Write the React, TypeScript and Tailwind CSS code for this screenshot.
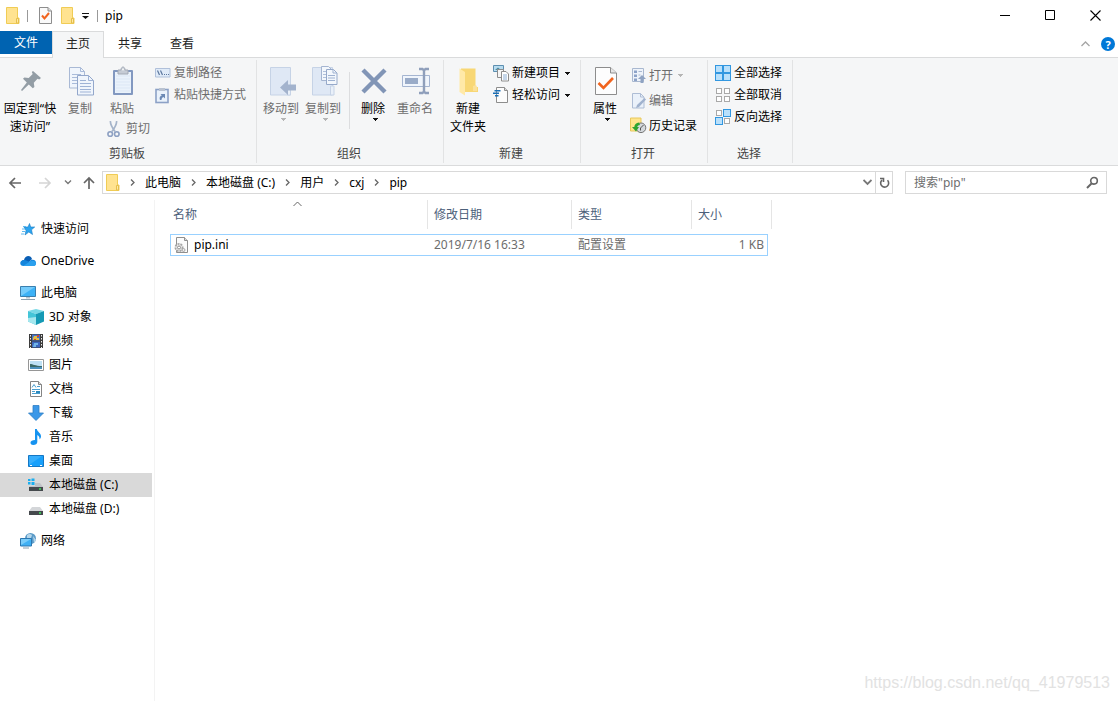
import { useState } from 'react';
import type { ReactNode } from 'react';
import clsx from 'clsx';

/* ---------- icons ---------- */

const FolderIcon = () => (
  <svg width="14" height="17" viewBox="0 0 14 17">
    <path d="M.5 .5h11v10.500h1.500v5.500H.5z" fill="#ffe390" stroke="#f0cc55" />
    <path d="M10.500 16V11.500h2V16z" fill="#ffe9a6" stroke="#e5bf4c" />
  </svg>
);

const CheckDocIcon = ({ big = false }: { big?: boolean }) => (
  <svg width={big ? 22 : 13} height={big ? 30 : 17} viewBox={big ? '0 0 22 30' : '0 0 13 17'}>
    {big ? (
      <>
        <path d="M.5 1.500h15l6 5.500v21.500H.5z" fill="#fdfdfd" stroke="#8d8d8d" />
        <path d="M15.500 1.500V7h6" fill="#e6e6e6" stroke="#8d8d8d" />
        <path d="M3.500 17l5 5L18 12" fill="none" stroke="#f1641e" strokeWidth="2.600" />
      </>
    ) : (
      <>
        <path d="M.5 .5h8.500l3.500 3.500v12.500H.5z" fill="#fafafa" stroke="#8d8d8d" />
        <path d="M9 .5V4h3.500" fill="#ddd" stroke="#8d8d8d" />
        <path d="M3 8.500l2.500 3 4.500-5.500" fill="none" stroke="#f1641e" strokeWidth="2" />
      </>
    )}
  </svg>
);

const Caret = ({ color = '#111' }: { color?: string }) => (
  <svg width="6" height="3" viewBox="0 0 6 3" shapeRendering="crispEdges">
    <path d="M0 0h6L3 3z" fill={color} />
  </svg>
);

const PinIcon = () => (
  <svg width="22" height="22" viewBox="0 0 22 22">
    <path d="M13 1l8 7-1.800 1.500-1.700-.7-3.700 4 .6 4.200-1.600 1.200-4-3.700L2 21l-1-1 5.800-7.500L3 8.800 4.400 7.500l4.300.4 4-3.800L11.800 2z" fill="#939da5" />
  </svg>
);

const CopyIcon = () => (
  <svg width="25" height="30" viewBox="0 0 25 30">
    <path d="M.5 1.500h11l4 4v16.500H.5z" fill="#f0f5fc" stroke="#a9b9d5" />
    <path d="M11.500 1.500v4h4M3 8.500h9M3 11.500h6M3 14.500h6M3 17.500h6" fill="none" stroke="#a9bbda" />
    <path d="M8.500 9.500h11l5 5v14.500h-16z" fill="#f0f5fc" stroke="#93a7cb" />
    <path d="M19.500 9.500v5h5M11 14.500h6M11 17.500h11M11 20.500h11M11 23.500h11M11 26h11" fill="none" stroke="#9fb3d6" />
  </svg>
);

const ClipboardIcon = () => (
  <svg width="22" height="30" viewBox="0 0 22 30">
    <rect x="1" y="4" width="20" height="25" rx="1" fill="#8298c0" />
    <path d="M3 6h16v21H3z" fill="#eaf2fb" />
    <path d="M4 10h14M4 13h14M4 16h14M4 19h14M4 22h14M4 25h14" stroke="#dce7f5" />
    <path d="M6 4h3c0-4 4-4 4 0h3v4H6z" fill="#c5cbd5" stroke="#a2a9b5" />
    <circle cx="11" cy="3.500" r="1" fill="#f5f6f7" />
  </svg>
);

const ScissorsIcon = () => (
  <svg width="13" height="17" viewBox="0 0 13 17" fill="none">
    <path d="M3.500 0c-.5 3 .5 5 4.500 10.500M9.500 0c.5 3-.5 5-4.500 10.500" stroke="#a4b3c9" strokeWidth="1.700" />
    <circle cx="3.200" cy="13" r="2.300" stroke="#8da0c2" strokeWidth="1.600" />
    <circle cx="9.800" cy="13" r="2.300" stroke="#8da0c2" strokeWidth="1.600" />
  </svg>
);

const PathIcon = () => (
  <svg width="16" height="10" viewBox="0 0 16 10">
    <path d="M.5 .5h14.500v8.500H.5z" fill="#e0ebf8" stroke="#b0c0da" />
    <path d="M2.500 2.500l2 4.500M5.500 2.500l2 4.500" stroke="#5d789f" strokeWidth="1.200" />
    <path d="M9 6.500h1M11 6.500h1M13 6.500h1" stroke="#5d789f" />
  </svg>
);

const ShortcutIcon = () => (
  <svg width="14" height="17" viewBox="0 0 14 17">
    <rect x="1" y="2.500" width="12" height="13" fill="#eaf2fb" stroke="#8ca1c6" strokeWidth="1.600" />
    <path d="M4 1h6v3H4z" fill="#b9c2d0" />
    <path d="M5 13c-1-3 .5-4.500 2-4.500L5.500 7H10v4.500L8.500 10C7 10.500 6.500 12 6.500 13z" fill="#6d8ab5" />
  </svg>
);

const MoveToIcon = () => (
  <svg width="27" height="30" viewBox="0 0 27 30">
    <path d="M1.500 1.500h20v27.500h-20z" fill="#dfe8f5" stroke="#c6d3e6" />
    <path d="M18.500 29v-7.500h3V29z" fill="#e9f0f9" stroke="#c6d3e6" />
    <path d="M11 21.500l8-7.500v4.500h8v6h-8V29z" fill="#a3b3cd" />
  </svg>
);

const CopyToIcon = () => (
  <svg width="27" height="30" viewBox="0 0 27 30">
    <path d="M1.500 1.500h20v27.500h-20z" fill="#dfe8f5" stroke="#c6d3e6" />
    <path d="M19.500 29v-9h3.500v9z" fill="#e9f0f9" stroke="#c6d3e6" />
    <path d="M10.500 .5h7l3 3v11h-10z" fill="#f3f7fc" stroke="#a5b5d1" />
    <path d="M12 5.500h4M12 8.500h4M12 11.500h4" stroke="#b0c0da" />
    <path d="M15.500 3.500h7l3.500 3.500v11.500h-10.500z" fill="#f3f7fc" stroke="#96a9ca" />
    <path d="M22 3.500V7h4M17 9.500h7M17 12h7M17 14.500h7" fill="none" stroke="#9fb2d1" />
  </svg>
);

const DeleteIcon = () => (
  <svg width="26" height="30" viewBox="0 0 26 30">
    <path d="M2 4l22 22M24 4L2 26" stroke="#8195b6" strokeWidth="4.400" />
  </svg>
);

const RenameIcon = () => (
  <svg width="30" height="30" viewBox="0 0 30 30">
    <path d="M1.500 9.500h27v11h-27z" fill="#f0f5fc" stroke="#a5b5d1" />
    <path d="M4 12h13v6H4z" fill="#99abc8" />
    <path d="M18 3h3.500L23 4.500 24.500 3H28M18 27h3.500l1.500-1.500 1.500 1.500H28M23 4v22" fill="none" stroke="#8f9fbb" strokeWidth="2.400" />
  </svg>
);

const NewFolderIcon = () => (
  <svg width="22" height="30" viewBox="0 0 22 30">
    <path d="M3 2.500h14.500V21H20v5H3z" fill="#f8d775" />
    <path d="M1.500 2.500L7 6v23.500L1.500 26z" fill="#ffe9a8" />
    <path d="M15 25v-5l3-1 1 2v4z" fill="#fbe19a" />
  </svg>
);

const NewItemIcon = () => (
  <svg width="17" height="17" viewBox="0 0 17 17">
    <path d="M.5 .5h10v6H.5z" fill="#b8dcf0" stroke="#5d8fb0" />
    <path d="M2 5l3-2.500L8 5z" fill="#4c8a9f" />
    <path d="M4.500 4.500h6v8h-6z" fill="#f6f6f6" stroke="#8d8d8d" />
    <path d="M8.500 6.500h4.500l2.500 2.500v7h-7z" fill="#fff" stroke="#8d8d8d" />
    <path d="M10 10h4M10 12h4M10 14h4" stroke="#8eb0d6" />
  </svg>
);

const EasyAccessIcon = () => (
  <svg width="17" height="17" viewBox="0 0 17 17">
    <path d="M3.500 .5h8l3 3v12h-11z" fill="#fcfcfc" stroke="#8d8d8d" />
    <path d="M11.500 .5v3h3" fill="#ddd" stroke="#8d8d8d" />
    <path d="M1.500 3h6v1.400h-6zM0 5.500h6v1.400H0zM2 8h3.500v1.400H2z" fill="#1b6fb5" />
  </svg>
);

const OpenIcon = () => (
  <svg width="14" height="17" viewBox="0 0 14 17">
    <path d="M.5 1.500h11v13H.5z" fill="#eef3fa" stroke="#a9b8d0" />
    <path d="M2 3.500h3v2.500H2zM2 7.500h3V10H2zM2 11.500h3V14H2z" fill="#8da3c8" />
    <path d="M6.500 4.500h3.500M6.500 8h2" stroke="#a9b8d0" />
    <path d="M10 8l4 4h-2.500v4h-3v-4H6z" fill="#8fa3c2" />
  </svg>
);

const EditIcon = () => (
  <svg width="14" height="17" viewBox="0 0 14 17">
    <path d="M.5 1.500h8l3.500 3.500v11H.5z" fill="#eaf1fa" stroke="#aebdd5" />
    <path d="M8.500 1.500V5H12" fill="none" stroke="#aebdd5" />
    <path d="M12.500 6L14 7.500 7 15l-3 1 1-3z" fill="#a0b2ce" />
  </svg>
);

const HistoryIcon = () => (
  <svg width="17" height="17" viewBox="0 0 17 17">
    <path d="M.5 1h10.500v13H.5z" fill="#ffe58d" stroke="#e8c85c" />
    <circle cx="11" cy="10.800" r="4.800" fill="#d4d8dc" stroke="#777" />
    <path d="M10.500 11l3-3M10.500 11v2.500" fill="none" stroke="#555" />
    <path d="M2 10l4 4.500 3-4.500H7.200C7.500 8.800 8.500 8 10 8L9 5.500C6 6 4.500 7.500 4.300 10z" fill="#2fa52f" />
  </svg>
);

const cells = [[0, 0], [8, 0], [0, 8], [8, 8]];

const SelectIcon = ({ filled }: { filled: boolean[] }) => (
  <svg width="17" height="17" viewBox="0 0 17 17">
    {cells.map(([x, y], i) =>
      filled[i] ? (
        <rect key={i} x={x + 0.5} y={y + 0.5} width="7" height="7" fill="#b9e0fb" stroke="#3297e0" />
      ) : (
        <rect key={i} x={x + 1.5} y={y + 1.5} width="5" height="5" fill="#fff" stroke="#a9a9a9" />
      )
    )}
  </svg>
);

const StarIcon = () => (
  <svg width="16" height="16" viewBox="0 0 16 16">
    <path d="M9.500 2.500l1.200 3.500h4L11.500 8.800l1 4.700-3.700-2.500-3.800 3L6 9.500 4 6h4z" fill="#2ba4ef" stroke="#1b7cc2" strokeWidth=".6" />
    <path d="M3 5.500h3M2 8h3M2 10.500h3M1 13h3" stroke="#5fbaf0" />
  </svg>
);

const CloudIcon = () => (
  <svg width="16" height="12" viewBox="0 0 16 12">
    <path d="M4 5C5 0 11-.3 12 4l-4 4H1C1 6 2.500 5 4 5z" fill="#0a5fb5" />
    <path d="M3.500 11C-.8 11-.8 5.500 3.500 5c3-.4 4 2 6 1.500C11 4 16 4 16 8c0 2-1 3-3 3z" fill="#1485dc" />
    <path d="M3 11l7-4.500c3-2 6 0 6 2S14.500 11 13 11z" fill="#2ba0ee" />
  </svg>
);

const PcIcon = () => (
  <svg width="16" height="16" viewBox="0 0 16 16">
    <path d="M.5 1.500h15v10H.5z" fill="#3db2f7" stroke="#3a7fae" />
    <path d="M1 2h14L1 11z" fill="#74cbfb" />
    <path d="M6 12h4v1.500H6z" fill="#b8c5cf" />
    <path d="M1 14.500h14" stroke="#8ba0b0" />
  </svg>
);

const CubeIcon = () => (
  <svg width="16" height="16" viewBox="0 0 16 16">
    <path d="M8 0l8 2-8 3-8-3z" fill="#77d9e6" />
    <path d="M0 2l8 3v11l-8-3.500z" fill="#43c5d8" />
    <path d="M16 2L8 5v11l8-3.500z" fill="#159ab5" />
    <path d="M0 9l8-1v8l-8-3.500z" fill="#a5e7ee" />
  </svg>
);

const VideoIcon = () => (
  <svg width="16" height="16" viewBox="0 0 16 16">
    <path d="M1 1h14v14H1z" fill="#3c3c3c" />
    <path d="M4 1.500h8v6H4z" fill="#4573c7" />
    <path d="M4 8.500h8v6H4z" fill="#3c66bd" />
    <path d="M6 3h3v2h2v2H5V5z" fill="#e2bd45" />
    <path d="M9 2h2v2H9zM6 6h2v1H6z" fill="#cf4635" />
    <path d="M6 10h4v2H8v2H5z" fill="#6fb4e8" />
    <path d="M2.500 2v13M13.500 2v13" stroke="#eee" strokeDasharray="1.500 1.500" />
  </svg>
);

const PictureIcon = () => (
  <svg width="16" height="16" viewBox="0 0 16 16">
    <path d="M.5 2.500h15v11H.5z" fill="#fff" stroke="#969696" />
    <path d="M2 4h12v8H2z" fill="#bfe1f5" />
    <path d="M2 7c3 0 5 2 12 2v1H2z" fill="#3d6a68" />
    <path d="M2 10h12v2H2z" fill="#4d91bd" />
  </svg>
);

const DocumentIcon = () => (
  <svg width="16" height="16" viewBox="0 0 16 16">
    <path d="M2.500 .5h8l3 3v12h-11z" fill="#fff" stroke="#848484" />
    <path d="M10.500 .5v3h3" fill="#ddd" stroke="#848484" />
    <path d="M4 6.500l2-3 2 3M9 5.500h3M4 8.500h8M4 10.500h3M4 12.500h8" fill="none" stroke="#4a9fd0" />
    <path d="M8 10h4v2H8z" fill="#2a88bd" />
  </svg>
);

const DownloadIcon = () => (
  <svg width="16" height="16" viewBox="0 0 16 16">
    <path d="M5 .5h6V8h4.500L8 15.500.5 8H5z" fill="#3b98e8" stroke="#2f7dc4" strokeWidth=".8" />
  </svg>
);

const MusicIcon = () => (
  <svg width="16" height="16" viewBox="0 0 16 16">
    <path d="M7 0h1.800c.4 3 4.700 4 4.200 8-.3 1.200-1 2-1.500 2.500.3-2.500-.7-3.500-2.200-4.500V13c0 1.800-1.800 3-4 3S2.500 15 2.500 13.500 4.500 11 7 11z" fill="#1593f0" />
  </svg>
);

const DesktopIcon = () => (
  <svg width="16" height="16" viewBox="0 0 16 16">
    <path d="M.5 2.500h15v11H.5z" fill="#18a0fb" stroke="#1577c4" />
    <path d="M2 12.500h2M12 12.500h2" stroke="#fff" />
    <path d="M1 12l13-9H1z" fill="#37aefc" />
  </svg>
);

const DriveIcon = ({ system = false }: { system?: boolean }) => (
  <svg width="16" height="16" viewBox="0 0 16 16">
    <path d="M4 6h8l3 4H1z" fill={system ? '#bfc2c6' : '#d4d6d9'} />
    <path d="M1 10h14v4H1z" fill="#45494d" />
    <path d="M11 12h2" stroke="#3ce35c" strokeWidth="1.400" />
    {system && (
      <>
        <path d="M0 1h7v8H0z" fill="#d9d9d9" />
        <path d="M0 2h2.500v2H0zM3.500 1.500h3V4h-3zM0 5h2.500v2.500H0zM3.500 5h3v3h-3z" fill="#19aef0" />
      </>
    )}
  </svg>
);

const NetworkIcon = () => (
  <svg width="16" height="16" viewBox="0 0 16 16">
    <circle cx="10.500" cy="5.500" r="5.500" fill="#5b9bc8" />
    <path d="M7 2c2-1.500 4-1 5 0l-1 3-4 1zM13 3l3 4-2 3z" fill="#b6d6ea" />
    <path d="M.5 5.500h11v7.500H.5z" fill="#3fb0f4" stroke="#2c77b0" />
    <path d="M1 6h10L1 12z" fill="#79ccfa" />
    <path d="M3 15h6" stroke="#8ba0b0" />
  </svg>
);

const IniIcon = () => (
  <svg width="16" height="17" viewBox="0 0 16 17">
    <path d="M2.500 .5h8l3 3v12h-11z" fill="#fbfbfb" stroke="#8f8f8f" />
    <path d="M10.500 .5v3h3" fill="#ddd" stroke="#8f8f8f" />
    <circle cx="5" cy="10.500" r="3.600" fill="#ececec" stroke="#a5a5a5" strokeWidth="1.800" strokeDasharray="2 1" />
    <circle cx="5" cy="10.500" r="1.500" fill="#fff" stroke="#8c8c8c" />
    <circle cx="9.500" cy="13" r="1.500" fill="#eee" stroke="#a5a5a5" />
  </svg>
);

const ArrowIcon = ({ dir, color = '#666' }: { dir: 'left' | 'right' | 'up'; color?: string }) => {
  const paths = {
    left: 'M13 7H2M7 2L2 7l5 5',
    right: 'M1 7h11M7 2l5 5-5 5',
    up: 'M7 13V2M2 7l5-5 5 5',
  };
  return (
    <svg width="14" height="14" viewBox="0 0 14 14">
      <path d={paths[dir]} fill="none" stroke={color} strokeWidth="1.700" />
    </svg>
  );
};

const Crumb = ({ children }: { children: ReactNode }) => (
  <>
    <span className="flex w-[25px] justify-center">
      <svg width="5" height="7" viewBox="0 0 5 7">
        <path d="M1 .5l3 3-3 3" fill="none" stroke="#666" strokeWidth="1.300" />
      </svg>
    </span>
    <button className="whitespace-nowrap">{children}</button>
  </>
);

/* ---------- ribbon ---------- */

type BigButtonProps = {
  icon: ReactNode;
  children: ReactNode;
  className: string;
  muted?: boolean;
  caret?: string;
};

const BigButton = ({ icon, children, className, muted, caret }: BigButtonProps) => (
  <button className={clsx('flex shrink-0 flex-col items-center pt-2', muted ? 'text-[#6d6d6d]' : 'text-black', className)}>
    <span className="flex h-[34px] items-start justify-center pl-[2px]">{icon}</span>
    <span className="whitespace-nowrap leading-[18px]">{children}</span>
    {caret && <span className="pl-1"><Caret color={caret} /></span>}
  </button>
);

type SmallButtonProps = {
  icon: ReactNode;
  children: ReactNode;
  muted?: boolean;
  caret?: string;
  tall?: boolean;
};

const SmallButton = ({ icon, children, muted, caret, tall }: SmallButtonProps) => (
  <button className={clsx('flex items-center', tall ? 'h-[25px]' : 'h-[22px]', muted ? 'text-[#6d6d6d]' : 'text-black')}>
    <span className="flex w-[19px] items-center">{icon}</span>
    <span className="whitespace-nowrap">{children}</span>
    {caret && <span className="pl-1"><Caret color={caret} /></span>}
  </button>
);

const RibbonGroup = ({ label, className, children }: { label: string; className: string; children: ReactNode }) => (
  <section className={clsx('my-[2px] flex shrink-0 flex-col border-r border-[#e2e3e4]', className)} aria-label={label}>
    <div className="-mt-[2px] flex flex-1">{children}</div>
    <div className="pr-[2px] text-center leading-[18px] text-[#444]">{label}</div>
  </section>
);

/* ---------- sidebar ---------- */

const navGroups = [
  [{ name: '快速访问', icon: <StarIcon /> }],
  [{ name: 'OneDrive', icon: <CloudIcon /> }],
  [
    { name: '此电脑', icon: <PcIcon /> },
    { name: '3D 对象', icon: <CubeIcon />, child: true },
    { name: '视频', icon: <VideoIcon />, child: true },
    { name: '图片', icon: <PictureIcon />, child: true },
    { name: '文档', icon: <DocumentIcon />, child: true },
    { name: '下载', icon: <DownloadIcon />, child: true },
    { name: '音乐', icon: <MusicIcon />, child: true },
    { name: '桌面', icon: <DesktopIcon />, child: true },
    { name: '本地磁盘 (C:)', icon: <DriveIcon system />, child: true },
    { name: '本地磁盘 (D:)', icon: <DriveIcon />, child: true },
  ],
  [{ name: '网络', icon: <NetworkIcon /> }],
];

const tabs = ['主页', '共享', '查看'];

const App = () => {
  const [activeTab, setActiveTab] = useState('主页');
  const [selected, setSelected] = useState('本地磁盘 (C:)');
  const [search, setSearch] = useState('');

  return (
    <div className="relative flex min-h-screen flex-col bg-white font-['Noto_Sans','Noto_Sans_CJK_SC',sans-serif] text-xs text-black">
      {/* title bar */}
      <header className="flex h-[31px] items-center">
        <div className="flex flex-1 items-center pl-[6px]">
          <FolderIcon />
          <span className="ml-[7px] h-3 w-px bg-[#999]" />
          <button aria-label="属性" className="ml-[11px]"><CheckDocIcon /></button>
          <button aria-label="新建文件夹" className="ml-[9px]"><FolderIcon /></button>
          <button aria-label="自定义" className="ml-[7px]">
            <svg width="7" height="6" viewBox="0 0 7 6">
              <path d="M0 0h7v1H0zM0 3h7L3.500 6z" fill="#111" />
            </svg>
          </button>
          <span className="ml-2 h-3 w-px bg-[#999]" />
          <h1 className="ml-[7px]">pip</h1>
        </div>
        <button aria-label="最小化" className="flex h-full w-[45px] items-center justify-center">
          <svg width="11" height="11" viewBox="0 0 11 11"><path d="M0 5.500h10" stroke="#000" /></svg>
        </button>
        <button aria-label="最大化" className="flex h-full w-[45px] items-center justify-center">
          <svg width="11" height="11" viewBox="0 0 11 11"><path d="M.5 .5h9v9h-9z" fill="none" stroke="#000" /></svg>
        </button>
        <button aria-label="关闭" className="flex h-full w-[45px] items-center justify-center">
          <svg width="11" height="11" viewBox="0 0 11 11"><path d="M.5 .5l10 10M10.500 .5l-10 10" stroke="#000" strokeWidth="1.100" /></svg>
        </button>
      </header>

      {/* tabs */}
      <nav className="flex h-[27px] border-b border-[#dadbdc]">
        <button className="h-[23px] w-[52px] bg-[#0063b1] text-white">文件</button>
        {tabs.map((tab) => (
          <button
            key={tab}
            onClick={() => setActiveTab(tab)}
            className={clsx(
              'h-[27px] w-[52px] border-x border-t pb-[2px] text-[#222]',
              tab === activeTab ? 'border-[#dadbdc] bg-[#f5f6f7]' : 'border-transparent'
            )}
          >
            {tab}
          </button>
        ))}
        <div className="flex flex-1 items-center justify-end pr-[3px]">
          <button aria-label="最小化功能区" className="pr-[11px]">
            <svg width="9" height="6" viewBox="0 0 9 6"><path d="M.5 5l4-4 4 4" fill="none" stroke="#a5a5a5" strokeWidth="1.300" /></svg>
          </button>
          <button aria-label="帮助" className="flex size-[14px] items-center justify-center rounded-full bg-[#0078d7] text-[11px] font-bold leading-none text-white">
            ?
          </button>
        </div>
      </nav>

      {/* ribbon */}
      <div className="flex h-[108px] overflow-hidden border-b border-[#dadbdc] bg-[#f5f6f7]">
        <RibbonGroup label="剪贴板" className="w-[257px]">
          <BigButton className="w-[60px]" icon={<span className="pt-1"><PinIcon /></span>}>
            固定到“快<br />速访问”
          </BigButton>
          <BigButton className="w-[40px]" muted icon={<CopyIcon />}>复制</BigButton>
          <div className="flex w-[55px] shrink-0 flex-col">
            <BigButton className="w-[44px]" muted icon={<ClipboardIcon />}>粘贴</BigButton>
            <div className="pl-[7px]">
              <SmallButton muted icon={<ScissorsIcon />}>剪切</SmallButton>
            </div>
          </div>
          <div className="pt-1">
            <SmallButton muted icon={<PathIcon />}>复制路径</SmallButton>
            <SmallButton muted icon={<ShortcutIcon />}>粘贴快捷方式</SmallButton>
          </div>
        </RibbonGroup>

        <RibbonGroup label="组织" className="w-[187px]">
          <BigButton className="ml-[3px] w-[42px]" muted caret="#b5b5b5" icon={<MoveToIcon />}>移动到</BigButton>
          <BigButton className="w-[42px]" muted caret="#b5b5b5" icon={<CopyToIcon />}>复制到</BigButton>
          <span className="mb-4 ml-[5px] mt-[14px] w-px bg-[#dcdddf]" />
          <BigButton className="w-[46px]" caret="#111" icon={<DeleteIcon />}>删除</BigButton>
          <BigButton className="w-[38px]" muted icon={<RenameIcon />}>重命名</BigButton>
        </RibbonGroup>

        <RibbonGroup label="新建" className="w-[137px]">
          <BigButton className="w-[48px]" icon={<NewFolderIcon />}>新建<br />文件夹</BigButton>
          <div className="pl-[1px] pt-1">
            <SmallButton caret="#111" icon={<NewItemIcon />}>新建项目</SmallButton>
            <SmallButton caret="#111" icon={<EasyAccessIcon />}>轻松访问</SmallButton>
          </div>
        </RibbonGroup>

        <RibbonGroup label="打开" className="w-[127px]">
          <BigButton className="w-[48px]" caret="#111" icon={<CheckDocIcon big />}>属性</BigButton>
          <div className="pl-[1px] pt-[5px]">
            <SmallButton tall muted caret="#b5b5b5" icon={<span className="pl-[2px]"><OpenIcon /></span>}>打开</SmallButton>
            <SmallButton tall muted icon={<span className="pl-[2px]"><EditIcon /></span>}>编辑</SmallButton>
            <SmallButton tall icon={<HistoryIcon />}>历史记录</SmallButton>
          </div>
        </RibbonGroup>

        <RibbonGroup label="选择" className="w-[85px]">
          <div className="pl-[7px] pt-1">
            <SmallButton icon={<SelectIcon filled={[true, true, true, true]} />}>全部选择</SmallButton>
            <SmallButton icon={<SelectIcon filled={[false, false, false, false]} />}>全部取消</SmallButton>
            <SmallButton icon={<SelectIcon filled={[false, true, true, false]} />}>反向选择</SmallButton>
          </div>
        </RibbonGroup>
      </div>

      {/* address bar */}
      <div className="flex h-[33px] items-center pl-2 pr-[11px]">
        <button aria-label="后退"><ArrowIcon dir="left" /></button>
        <button aria-label="前进" className="ml-4"><ArrowIcon dir="right" color="#d5d5d5" /></button>
        <button aria-label="最近位置" className="ml-3">
          <svg width="8" height="5" viewBox="0 0 8 5"><path d="M1 .5l3 3 3-3" fill="none" stroke="#777" strokeWidth="1.400" /></svg>
        </button>
        <button aria-label="上移" className="ml-[10px]"><ArrowIcon dir="up" /></button>
        <div className="ml-[6px] flex h-[23px] flex-1 items-center border border-[#d9d9d9] pl-[3px]">
          <FolderIcon />
          <Crumb>此电脑</Crumb>
          <Crumb>本地磁盘 (C:)</Crumb>
          <Crumb>用户</Crumb>
          <Crumb>cxj</Crumb>
          <Crumb>pip</Crumb>
          <button aria-label="历史" className="ml-auto px-[3px]">
            <svg width="9" height="7" viewBox="0 0 9 7"><path d="M.5 1l4 4 4-4" fill="none" stroke="#777" strokeWidth="1.800" /></svg>
          </button>
          <button aria-label="刷新" className="flex h-full w-[17px] items-center justify-center border-l border-[#d9d9d9]">
            <svg width="11" height="12" viewBox="0 0 11 12">
              <path d="M8.500 3.300a4 4 0 1 1-5.500-.2M1 1.500h3.500V5" fill="none" stroke="#666" strokeWidth="1.600" />
            </svg>
          </button>
        </div>
        <label className="ml-3 flex h-[23px] w-[202px] items-center border border-[#d9d9d9] pl-2 pr-[7px]">
          <input
            aria-label="搜索"
            value={search}
            onChange={(e) => setSearch(e.target.value)}
            placeholder={'搜索"pip"'}
            className="min-w-0 flex-1 outline-none placeholder:text-[#6d6d6d]"
          />
          <svg width="13" height="13" viewBox="0 0 13 13" fill="none" stroke="#666">
            <circle cx="8" cy="4.800" r="3.300" strokeWidth="1.600" />
            <path d="M5.500 7.500L1 12" strokeWidth="2" />
          </svg>
        </label>
      </div>

      <div className="flex flex-1 pt-px">
        <aside className="w-[155px] shrink-0 border-r border-[#f3f3f3] pt-[17px]">
          {navGroups.map((group, i) => (
            <ul key={i} className="mb-2">
              {group.map((item) => (
                <li key={item.name}>
                  <button
                    onClick={() => setSelected(item.name)}
                    className={clsx(
                      'flex h-6 w-[152px] items-center gap-[5px] whitespace-nowrap',
                      'child' in item ? 'pl-7' : 'pl-5',
                      selected === item.name && 'bg-[#d9d9d9]'
                    )}
                  >
                    <span className="flex w-4 justify-center">{item.icon}</span>
                    {item.name}
                  </button>
                </li>
              ))}
            </ul>
          ))}
        </aside>

        <main className="flex-1 pl-[15px]">
          <table className="w-[602px] table-fixed border-separate border-spacing-0 text-left">
            <colgroup>
              <col className="w-[258px]" />
              <col className="w-[144px]" />
              <col className="w-[120px]" />
              <col className="w-[76px]" />
              <col className="w-[4px]" />
            </colgroup>
            <thead>
              <tr className="h-[29px] text-[#4c607a]">
                <th className="relative border-r border-[#e5e5e5] p-0 pl-[3px] font-normal">
                  名称
                  <svg className="absolute left-[123px] top-[1px]" width="9" height="6" viewBox="0 0 9 6">
                    <path d="M.5 5l4-4 4 4" fill="none" stroke="#666" />
                  </svg>
                </th>
                <th className="border-r border-[#e5e5e5] p-0 pl-[6px] font-normal">修改日期</th>
                <th className="border-r border-[#e5e5e5] p-0 pl-[6px] font-normal">类型</th>
                <th colSpan={2} className="border-r border-[#e5e5e5] p-0 pl-[6px] font-normal">大小</th>
              </tr>
            </thead>
            <tbody>
              <tr className="h-[5px]"><td colSpan={5} className="p-0" /></tr>
              <tr className="h-[22px] text-[#6d6d6d]">
                <td className="border-y border-l border-[#99d1ff] p-0 pl-[3px] text-black">
                  <span className="flex items-center gap-1"><IniIcon />pip.ini</span>
                </td>
                <td className="border-y border-[#99d1ff] p-0 pl-[6px]">2019/7/16 16:33</td>
                <td className="border-y border-[#99d1ff] p-0 pl-[6px]">配置设置</td>
                <td className="border-y border-r border-[#99d1ff] p-0 pr-[3px] text-right">1 KB</td>
                <td className="p-0" />
              </tr>
            </tbody>
          </table>
        </main>
      </div>

      <span className="absolute bottom-2 right-2 font-['Liberation_Sans',sans-serif] text-base leading-5 text-[#e2e2e2]">
        https://blog.csdn.net/qq_41979513
      </span>
    </div>
  );
};

export default App;
